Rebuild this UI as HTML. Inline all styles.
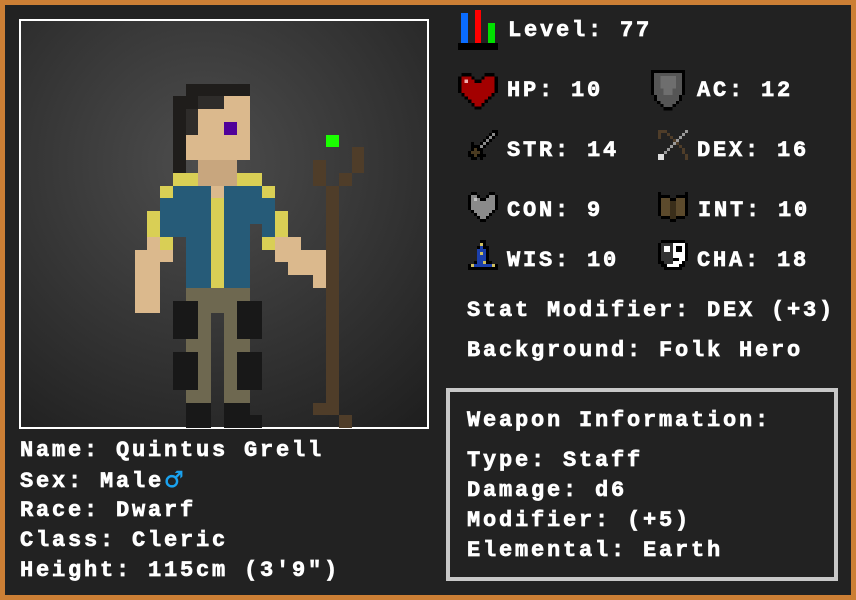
<!DOCTYPE html>
<html><head><meta charset="utf-8"><style>
*{margin:0;padding:0;box-sizing:border-box}
body{width:856px;height:600px;background:#cc7f35;position:relative;overflow:hidden}
#in{position:absolute;left:5px;top:5px;width:846px;height:590px;background:#222222}
.t{position:absolute;color:#fff;font:bold 22px/24px "Liberation Mono",monospace;letter-spacing:2.8px;white-space:pre;-webkit-text-stroke:0.7px #fff}
#por{position:absolute;left:19px;top:19px;width:410px;height:410px;border:2px solid #fff;background:radial-gradient(circle at 45% 35%,#4d4d4d 0%,#383838 45%,#1e1e1e 100%);overflow:hidden}
#wb{position:absolute;left:446px;top:388px;width:392px;height:193px;border:4px solid #c8c8c8}
</style></head><body>
<div id="in"></div>
<div id="por"></div>
<svg style="position:absolute;left:0;top:0" width="856" height="600" shape-rendering="crispEdges">
<g>
<rect x="186" y="84" width="64" height="12" fill="#1f1d1b"/>
<rect x="173" y="96" width="25" height="13" fill="#1f1d1b"/>
<rect x="198" y="96" width="26" height="13" fill="#2e2c2a"/>
<rect x="224" y="96" width="26" height="13" fill="#dbb98d"/>
<rect x="173" y="109" width="13" height="64" fill="#1f1d1b"/>
<rect x="186" y="109" width="12" height="26" fill="#2e2c2a"/>
<rect x="198" y="109" width="52" height="26" fill="#dbb98d"/>
<rect x="224" y="122" width="13" height="13" fill="#50009a"/>
<rect x="186" y="135" width="64" height="25" fill="#dbb98d"/>
<rect x="198" y="160" width="39" height="26" fill="#c8a67e"/>
<rect x="173" y="173" width="25" height="13" fill="#d9cf55"/>
<rect x="237" y="173" width="25" height="13" fill="#d9cf55"/>
<rect x="160" y="186" width="13" height="12" fill="#d9cf55"/>
<rect x="262" y="186" width="13" height="12" fill="#d9cf55"/>
<rect x="173" y="186" width="89" height="12" fill="#265b78"/>
<rect x="211" y="186" width="13" height="12" fill="#dbb98d"/>
<rect x="160" y="198" width="115" height="26" fill="#265b78"/>
<rect x="160" y="224" width="90" height="13" fill="#265b78"/>
<rect x="262" y="224" width="13" height="13" fill="#265b78"/>
<rect x="186" y="237" width="64" height="51" fill="#265b78"/>
<rect x="211" y="198" width="13" height="90" fill="#d9cf55"/>
<rect x="147" y="211" width="13" height="26" fill="#d9cf55"/>
<rect x="275" y="211" width="13" height="26" fill="#d9cf55"/>
<rect x="160" y="237" width="13" height="13" fill="#d9cf55"/>
<rect x="262" y="237" width="13" height="13" fill="#d9cf55"/>
<rect x="147" y="237" width="13" height="13" fill="#dbb98d"/>
<rect x="135" y="250" width="38" height="12" fill="#dbb98d"/>
<rect x="135" y="262" width="25" height="51" fill="#dbb98d"/>
<rect x="275" y="237" width="26" height="13" fill="#dbb98d"/>
<rect x="275" y="250" width="51" height="12" fill="#dbb98d"/>
<rect x="288" y="262" width="38" height="13" fill="#dbb98d"/>
<rect x="313" y="275" width="13" height="13" fill="#dbb98d"/>
<rect x="186" y="288" width="64" height="25" fill="#6e6850"/>
<rect x="198" y="313" width="13" height="90" fill="#6e6850"/>
<rect x="224" y="313" width="13" height="90" fill="#6e6850"/>
<rect x="186" y="339" width="25" height="13" fill="#6e6850"/>
<rect x="224" y="339" width="26" height="13" fill="#6e6850"/>
<rect x="186" y="390" width="25" height="13" fill="#6e6850"/>
<rect x="224" y="390" width="26" height="13" fill="#6e6850"/>
<rect x="173" y="301" width="25" height="38" fill="#181818"/>
<rect x="237" y="301" width="25" height="38" fill="#181818"/>
<rect x="173" y="352" width="25" height="38" fill="#181818"/>
<rect x="237" y="352" width="25" height="38" fill="#181818"/>
<rect x="186" y="403" width="25" height="25" fill="#181818"/>
<rect x="224" y="403" width="26" height="25" fill="#181818"/>
<rect x="250" y="415" width="12" height="13" fill="#181818"/>
<rect x="326" y="186" width="13" height="229" fill="#4f3d29"/>
<rect x="313" y="403" width="13" height="12" fill="#4f3d29"/>
<rect x="339" y="415" width="13" height="13" fill="#4f3d29"/>
<rect x="313" y="160" width="13" height="26" fill="#4f3d29"/>
<rect x="339" y="173" width="13" height="13" fill="#4f3d29"/>
<rect x="352" y="147" width="12" height="26" fill="#4f3d29"/>
<rect x="326" y="135" width="13" height="12" fill="#1aff00"/>
</g>
<!-- level icon -->
<rect x="461" y="13" width="7" height="30" fill="#0a6cff"/>
<rect x="475" y="10" width="6" height="33" fill="#ff0000"/>
<rect x="488" y="23" width="7" height="20" fill="#00e000"/>
<rect x="458" y="43" width="40" height="7" fill="#000"/>
<!-- heart -->
<g transform="translate(458,73) scale(3.33)">
<path d="M1 0H4V1H5V2H7V1H8V0H11V1H12V6H11V7H10V8H9V9H8V10H7V11H5V10H4V9H3V8H2V7H1V6H0V1H1Z" fill="#000"/>
<path d="M1 1H4V2H5V3H7V2H8V1H11V6H10V7H9V8H8V9H7V10H5V9H4V8H3V7H2V6H1Z" fill="#a30000"/>
<rect x="2" y="2" width="1" height="1" fill="#f0b0b0"/>
</g>
<!-- shield -->
<g transform="translate(651,70) scale(3.1)">
<path d="M0 0H11V8H10V10H9V11H8V12H7V13H4V12H3V11H2V10H1V8H0Z" fill="#000"/>
<path d="M1 1H10V8H9V10H8V11H7V12H4V11H3V10H2V8H1Z" fill="#555"/>
<path d="M3 2H8V6H7V8H4V6H3Z" fill="#6e6e6e"/>
</g>
<!-- sword -->
<g transform="translate(468,130) scale(3)">
<path d="M8 0H10V2H9V3H8V4H7V5H6V6H5V7H4V8H3V7H2V6H3V5H4V4H5V3H6V2H7V1H8Z" fill="#000"/>
<path d="M8 1H9V2H8V3H7V4H6V5H5V6H4V7H3V6H4V5H5V4H6V3H7V2H8Z" fill="#8a8a8a"/>
<path d="M1 4H2V5H3V6H4V7H5V8H6V9H5V10H4V9H3V10H1V9H0V7H1Z" fill="#000"/>
<path d="M2 6H3V7H4V8H3V9H2V8H1V7H2Z" fill="#4a3a20"/>
</g>
<!-- bow -->
<g transform="translate(658,130) scale(3)">
<path d="M0 0H3V1H4V2H5V3H6V4H7V5H8V6H9V8H10V10H9V8H8V6H7V5H6V4H5V3H4V2H3V1H1V3H0Z" fill="#4f3d29"/>
<path d="M9 0H10V1H9V2H8V3H7V4H6V5H5V6H4V7H3V8H2V7H3V6H4V5H5V4H6V3H7V2H8V1H9Z" fill="#9a9a9a"/>
<rect x="0" y="8" width="2" height="2" fill="#ddd"/>
</g>
<!-- con heart -->
<g transform="translate(468,192) scale(3)">
<path d="M1 0H3V1H4V2H6V1H7V0H9V1H10V6H9V7H8V8H7V9H6V10H4V9H3V8H2V7H1V6H0V1H1Z" fill="#000"/>
<path d="M1 1H3V2H4V3H6V2H7V1H9V6H8V7H7V8H6V9H4V8H3V7H2V6H1Z" fill="#8a8a8a"/>
<rect x="2" y="2" width="1" height="1" fill="#c0c0c0"/>
</g>
<!-- book -->
<g transform="translate(658,192) scale(3)">
<path d="M0 0H1V1H4V2H6V1H9V0H10V8H9V9H6V10H4V9H1V8H0Z" fill="#000"/>
<path d="M1 2H4V3H5V9H4V8H1Z" fill="#5c4a2c"/>
<path d="M5 3H6V2H9V8H6V9H5Z" fill="#5c4a2c"/>
<rect x="4" y="3" width="2" height="6" fill="#3a2e1a"/>
</g>
<!-- wizard hat -->
<g transform="translate(468,240) scale(3)">
<path d="M4 0H6V2H7V7H8V8H10V10H0V8H2V7H3V2H4Z" fill="#000"/>
<path d="M4 1H5V3H6V8H7V9H9V9H1V9H3V8H3V3H4Z" fill="#1b3faa"/>
<rect x="1" y="8" width="8" height="1" fill="#1b3faa"/>
<rect x="1" y="8" width="1" height="1" fill="#d0c060"/><rect x="4" y="4" width="1" height="1" fill="#d0c060"/><rect x="5" y="7" width="1" height="1" fill="#d0c060"/><rect x="8" y="8" width="1" height="1" fill="#d0c060"/><rect x="4" y="1" width="1" height="1" fill="#d0c060"/>
</g>
<!-- mask -->
<g transform="translate(658,240) scale(3)">
<path d="M1 0H9V1H10V7H9V9H8V10H2V9H1V8H0V1H1Z" fill="#000"/>
<path d="M1 1H5V9H3V8H2V7H1Z" fill="#333"/>
<path d="M5 1H9V7H8V8H7V9H3V8H5Z" fill="#fff"/>
<rect x="2" y="2" width="2" height="2" fill="#fff"/>
<rect x="6" y="2" width="2" height="2" fill="#000"/>
<rect x="5" y="6" width="2" height="1" fill="#000"/>
</g>
</svg>
<div id="wb"></div>
<div class="t" style="left:508px;top:19px">Level: 77</div>
<div class="t" style="left:507px;top:79px">HP: 10</div>
<div class="t" style="left:697px;top:79px">AC: 12</div>
<div class="t" style="left:507px;top:139px">STR: 14</div>
<div class="t" style="left:697px;top:139px">DEX: 16</div>
<div class="t" style="left:507px;top:199px">CON: 9</div>
<div class="t" style="left:698px;top:199px">INT: 10</div>
<div class="t" style="left:507px;top:249px">WIS: 10</div>
<div class="t" style="left:697px;top:249px">CHA: 18</div>
<div class="t" style="left:467px;top:299px">Stat Modifier: DEX (+3)</div>
<div class="t" style="left:467px;top:339px">Background: Folk Hero</div>
<div class="t" style="left:467px;top:409px">Weapon Information:</div>
<div class="t" style="left:467px;top:449px">Type: Staff</div>
<div class="t" style="left:467px;top:479px">Damage: d6</div>
<div class="t" style="left:467px;top:509px">Modifier: (+5)</div>
<div class="t" style="left:467px;top:539px">Elemental: Earth</div>
<div class="t" style="left:20px;top:439px">Name: Quintus Grell</div>
<div class="t" style="left:20px;top:469px">Sex: Male<span style="color:#1aa3f0;-webkit-text-stroke:0.5px #1aa3f0;font-family:'DejaVu Sans',sans-serif;letter-spacing:0">♂</span></div>
<div class="t" style="left:20px;top:499px">Race: Dwarf</div>
<div class="t" style="left:20px;top:529px">Class: Cleric</div>
<div class="t" style="left:20px;top:559px">Height: 115cm (3'9")</div>
</body></html>
